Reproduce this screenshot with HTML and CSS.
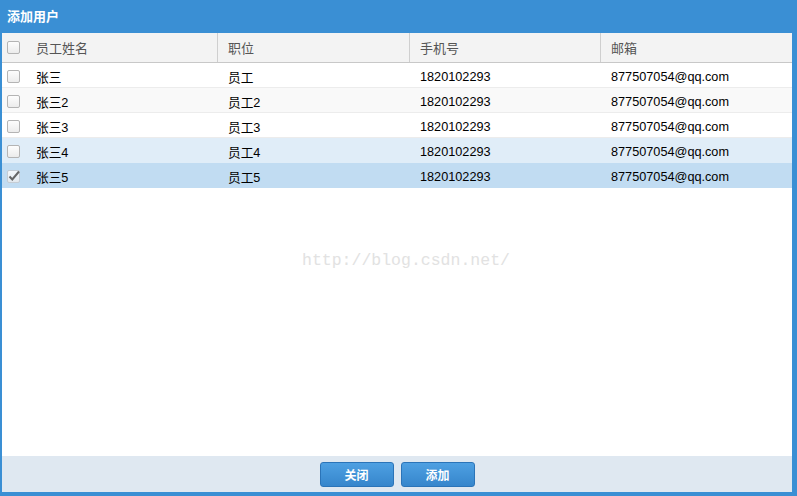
FILE: index.html
```html
<!DOCTYPE html>
<html lang="zh">
<head>
<meta charset="utf-8">
<title>添加用户</title>
<link rel="stylesheet" href="styles.css">
</head>
<body>
<div class="dialog">
  <div class="titlebar">添加用户</div>
  <div class="content">
    <div class="grid">
      <div class="row head">
        <div class="cell chk"><span class="box"></span></div>
        <div class="cell">员工姓名</div>
        <div class="cell sep">职位</div>
        <div class="cell sep">手机号</div>
        <div class="cell sep">邮箱</div>
      </div>
      <div class="row">
        <div class="cell chk"><span class="box"></span></div>
        <div class="cell">张三</div>
        <div class="cell sep">员工</div>
        <div class="cell sep">1820102293</div>
        <div class="cell sep">877507054@qq.com</div>
      </div>
      <div class="row alt">
        <div class="cell chk"><span class="box"></span></div>
        <div class="cell">张三2</div>
        <div class="cell sep">员工2</div>
        <div class="cell sep">1820102293</div>
        <div class="cell sep">877507054@qq.com</div>
      </div>
      <div class="row">
        <div class="cell chk"><span class="box"></span></div>
        <div class="cell">张三3</div>
        <div class="cell sep">员工3</div>
        <div class="cell sep">1820102293</div>
        <div class="cell sep">877507054@qq.com</div>
      </div>
      <div class="row hover">
        <div class="cell chk"><span class="box"></span></div>
        <div class="cell">张三4</div>
        <div class="cell sep">员工4</div>
        <div class="cell sep">1820102293</div>
        <div class="cell sep">877507054@qq.com</div>
      </div>
      <div class="row selected">
        <div class="cell chk"><span class="box checked"><svg viewBox="0 0 13 13" width="13" height="13"><path d="M2.5 6.5 L5.3 9.5 L12 1.5" fill="none" stroke="#666" stroke-width="2"/></svg></span></div>
        <div class="cell">张三5</div>
        <div class="cell sep">员工5</div>
        <div class="cell sep">1820102293</div>
        <div class="cell sep">877507054@qq.com</div>
      </div>
    </div>
    <div class="watermark">http://blog.csdn.net/</div>
  </div>
  <div class="footer">
    <button class="btn">关闭</button>
    <button class="btn">添加</button>
  </div>
</div>
</body>
</html>
```
FILE: styles.css
```css
html, body {
  margin: 0;
  padding: 0;
}
body {
  width: 797px;
  height: 496px;
  background: #3a8fd4;
  font-family: "Liberation Sans", Arial, "Noto Sans CJK SC", sans-serif;
  font-size: 12.7px;
  color: #000;
}
.dialog {
  display: flex;
  flex-direction: column;
  height: 496px;
  box-sizing: border-box;
  padding: 0 5px 4px 2px;
}
.titlebar {
  height: 33px;
  line-height: 31px;
  padding-left: 5px;
  color: #fff;
  font-size: 13px;
  font-weight: bold;
  font-family: "Noto Sans CJK SC", sans-serif;
}
.content {
  position: relative;
  flex: 1;
  background: #fff;
}
.grid {
  display: flex;
  flex-direction: column;
}
.row {
  display: grid;
  grid-template-columns: 24px 191px 192px 191px 1fr;
  height: 25px;
  box-sizing: border-box;
  border-bottom: 1px solid #ececec;
  align-items: stretch;
}
.row.head {
  height: 30px;
  background: #f3f3f3;
  border-bottom: 1px solid #c8c8c8;
  color: #555;
  font-size: 13px;
  font-family: "Noto Sans CJK SC", sans-serif;
}
.row.alt { background: #f9f9f9; }
.row.hover { background: #e0edf8; border-bottom-color: #e0edf8; }
.row.selected { background: #c1dcf2; border-bottom-color: #c1dcf2; }
.cell {
  display: flex;
  align-items: center;
  padding-left: 10px;
  white-space: nowrap;
  overflow: hidden;
}
.row:not(.head) .cell {
  padding-top: 3px;
}
.head .cell.sep {
  border-left: 1px solid #cfcfcf;
}
.row:not(.head) .cell.sep {
  border-left: 1px solid transparent;
}
.cell.chk {
  padding-left: 5px;
}
.box {
  display: block;
  width: 13px;
  height: 13px;
  box-sizing: border-box;
  border: 1px solid #b4b4b4;
  border-radius: 2px;
  background: linear-gradient(#fdfdfd, #ececec);
  position: relative;
}
.box.checked {
  border-color: #c4ccd4;
  background: linear-gradient(#f4f8fb, #e2e8ee);
}
.box svg {
  display: block;
  position: absolute;
  left: -1px;
  top: -1px;
}
.watermark {
  position: absolute;
  left: 300px;
  top: 218px;
  font-family: "Liberation Mono", monospace;
  font-size: 16.5px;
  color: #e2e2e2;
}
.footer {
  height: 36px;
  background: #dfe8f1;
  display: flex;
  justify-content: center;
  align-items: center;
  gap: 7px;
}
.btn {
  width: 74px;
  height: 25px;
  border: 1px solid #2b74b8;
  border-radius: 3px;
  background: linear-gradient(#4ea0e2, #3686cc);
  color: #fff;
  font-size: 12px;
  font-weight: bold;
  font-family: "Noto Sans CJK SC", sans-serif;
  padding: 0;
  cursor: pointer;
}
```
